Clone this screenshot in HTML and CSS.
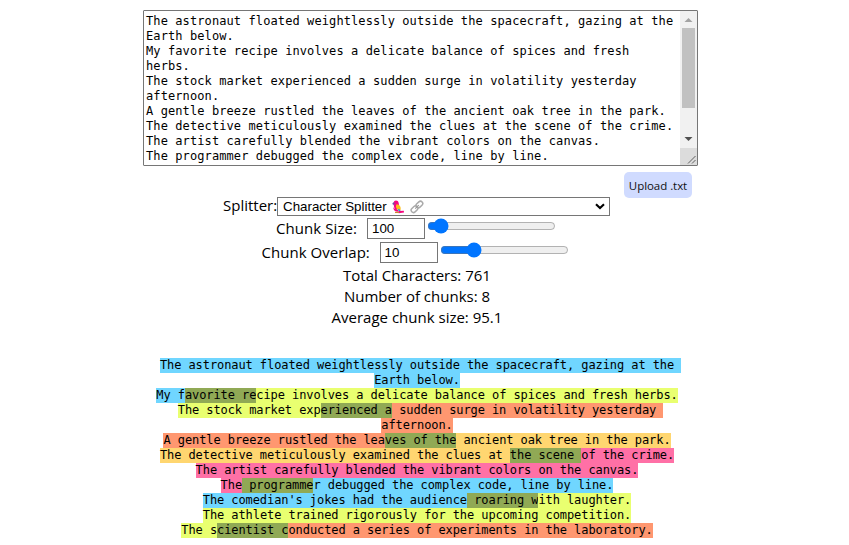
FILE: index.html
```
<!DOCTYPE html>
<html lang="en">
<head>
<meta charset="utf-8">
<title>Chunk Visualizer</title>
<link rel="stylesheet" href="styles.css">
</head>
<body>
<main class="app">
  <div class="editor">
    <div class="editor-text">The astronaut floated weightlessly outside the spacecraft, gazing at the
Earth below.
My favorite recipe involves a delicate balance of spices and fresh
herbs.
The stock market experienced a sudden surge in volatility yesterday
afternoon.
A gentle breeze rustled the leaves of the ancient oak tree in the park.
The detective meticulously examined the clues at the scene of the crime.
The artist carefully blended the vibrant colors on the canvas.
The programmer debugged the complex code, line by line.</div>
    <div class="scrollbar">
      <svg class="arrow" viewBox="0 0 17 17"><path d="M4.5 11 8.5 7 12.5 11Z" fill="#a3a3a3"/></svg>
      <div class="thumb"></div>
      <div class="track"></div>
      <svg class="arrow" viewBox="0 0 17 17"><path d="M4.5 6 8.5 10 12.5 6Z" fill="#505050"/></svg>
      <svg class="grip" viewBox="0 0 17 17"><path d="M8 15.5 15.5 8M12 15.5 15.5 12" stroke="#606060" fill="none"/></svg>
    </div>
  </div>
  <div class="upload-row"><button class="upload" type="button">Upload .txt</button></div>
  <div class="row splitter">
    <span class="label label-splitter">Splitter:</span>
    <div class="select" role="combobox">
      <span class="select-text">Character Splitter</span>
      <svg class="parrot" viewBox="0 0 14 14">
        <path d="M3 1.5C4-.2 7.4.1 7.7 3L8.5 8 5 10C2.6 8 2.5 5 3 1.5Z" fill="#f5087f"/>
        <path d="M3 2 1.4 3.2 2 5 3.8 4Z" fill="#704c9e"/>
        <path d="M2.2 7.2C2.4 10.5 4.5 12 8 11.7L7 9.8 4 9Z" fill="#f5087f"/>
        <path d="M5.6 4.3C8.9 4.6 10.2 7 9.4 10.5L6.5 9.6C4.6 8 4.6 6 5.6 4.3Z" fill="#ffbd16"/>
        <path d="M8 8.8 9.6 10.8 8.4 11.5 6.8 9.8Z" fill="#16a9df"/>
        <path d="M8 11 12.8 10.8 13 12.5 7.7 13.2Z" fill="#f5087f"/>
        <path d="M4 12.4H8" stroke="#c98a33" stroke-width="1.3"/>
      </svg>
      <svg class="link" viewBox="0 0 14 14">
        <g fill="none" stroke="#aaa" stroke-width="1.5"><rect x="-3.7" y="-2.3" width="7.4" height="4.6" rx="2.3" transform="translate(4.5 9.2) rotate(-43)"/><rect x="-3.7" y="-2.3" width="7.4" height="4.6" rx="2.3" transform="translate(9.4 4.5) rotate(-43)"/></g>
        <path d="M5.2 8.7 8.8 5.1" stroke="#999" stroke-width="1.1"/>
      </svg>
      <svg class="caret" viewBox="0 0 10 7"><path d="M1 1.2 5 5 9 1.2" fill="none" stroke="#000" stroke-width="2.1"/></svg>
    </div>
  </div>
  <div class="row field">
    <span class="label label-size">Chunk Size:</span>
    <input class="number" type="text" value="100">
    <input class="range" type="range" min="0" max="1000" value="50">
  </div>
  <div class="row field">
    <span class="label label-overlap">Chunk Overlap:</span>
    <input class="number" type="text" value="10">
    <input class="range" type="range" min="0" max="1000" value="232">
  </div>
  <div class="stats">
    <div class="total">Total Characters: 761</div>
    <div class="count">Number of chunks: 8</div>
    <div class="average">Average chunk size: 95.1</div>
  </div>
  <div class="chunks">
    <div class="line trailing"><span class="blue">The astronaut floated weightlessly outside the spacecraft, gazing at the </span></div>
    <div class="line"><span class="blue">Earth below.</span></div>
    <div class="line"><span class="blue">My f</span><span class="overlap">avorite re</span><span class="lime">cipe involves a delicate balance of spices and fresh herbs.</span></div>
    <div class="line trailing"><span class="lime">The stock market exp</span><span class="overlap">erienced a</span><span class="orange"> sudden surge in volatility yesterday </span></div>
    <div class="line"><span class="orange">afternoon.</span></div>
    <div class="line"><span class="orange">A gentle breeze rustled the lea</span><span class="overlap">ves of the</span><span class="yellow"> ancient oak tree in the park.</span></div>
    <div class="line"><span class="yellow">The detective meticulously examined the clues at </span><span class="overlap">the scene </span><span class="pink">of the crime.</span></div>
    <div class="line"><span class="pink">The artist carefully blended the vibrant colors on the canvas.</span></div>
    <div class="line"><span class="pink">The</span><span class="overlap"> programme</span><span class="blue">r debugged the complex code, line by line.</span></div>
    <div class="line"><span class="blue">The comedian's jokes had the audience</span><span class="overlap"> roaring w</span><span class="lime">ith laughter.</span></div>
    <div class="line"><span class="lime">The athlete trained rigorously for the upcoming competition.</span></div>
    <div class="line"><span class="lime">The s</span><span class="overlap">cientist c</span><span class="orange">onducted a series of experiments in the laboratory.</span></div>
  </div>
</main>
</body>
</html>
```
FILE: styles.css
```
* { box-sizing: border-box; }
body { margin: 0; background: #fff; color: #000; font: 15px/21px "Open Sans", sans-serif; overflow: hidden; }
.app { width: 834px; height: 545px; padding-top: 10px; display: flex; flex-direction: column; align-items: center; }
.editor { width: 555px; height: 156px; flex: none; margin-left: 7px; display: flex; border: 1px solid #767676; border-radius: 1px; overflow: hidden; }
.editor-text { flex: 1; padding: 3px 2px 0; white-space: pre; font: 12px/15px "DejaVu Sans Mono", monospace; letter-spacing: 0.098px; }
.scrollbar { width: 17px; display: flex; flex-direction: column; background: #f1f1f1; }
.arrow, .grip { width: 17px; height: 17px; display: block; flex: none; }
.thumb { width: 13px; height: 80px; margin-left: 2px; background: #c1c1c1; }
.track { flex: 1; }
.grip { background: #dcdcdc; }
.upload-row { width: 555px; margin-left: 7px; padding: 6px 6px 0 0; display: flex; justify-content: flex-end; }
.upload { width: 68px; height: 26px; padding: 1px 0 0; border: 0; border-radius: 5px; background: #d0dbff; color: #111; font: 11.5px/25px "Open Sans", sans-serif; letter-spacing: -0.05px; white-space: nowrap; }
.row { display: flex; flex: none; }
.splitter { height: 20px; margin-top: -1px; margin-right: 1px; }
.label { white-space: pre; line-height: 20px; }
.label-splitter { width: 54px; margin-top: -2px; }
.label-size { width: 91px; letter-spacing: 0.08px; }
.label-overlap { width: 118px; letter-spacing: 0.04px; }
.select { width: 333px; height: 19px; display: flex; align-items: center; padding: 0 2px 0 5px; border: 1px solid #767676; font: 13.333px/17px "Liberation Sans", sans-serif; }
.select-text { width: 108px; white-space: nowrap; }
.parrot { width: 14px; height: 14px; }
.link { width: 14px; height: 14px; margin-left: 5px; }
.caret { width: 10px; height: 7px; margin-left: auto; margin-right: 2px; }
.field { height: 24px; padding-top: 1px; }
.field + .field { margin-right: 2px; }
.number { width: 58px; height: 21px; padding: 1px 4px; border: 1px solid #767676; font: 13.333px "Liberation Sans", sans-serif; }
.range { width: 129px; height: 16px; margin: 0 2px; }
.stats { text-align: center; }
.stats > div { height: 21px; white-space: pre; }
.chunks { width: 100%; margin-top: 30px; font: 12px/15px "DejaVu Sans Mono", monospace; letter-spacing: -0.083px; }
.line { height: 15px; display: flex; justify-content: center; white-space: pre; }
.line > span { height: 15px; }
.trailing { padding-left: 7.15px; }
.blue { background: #70d6ff; }
.lime { background: #e9ff70; }
.orange { background: #ff9770; }
.yellow { background: #ffd670; }
.pink { background: #ff70a6; }
.overlap { background: #90a955; }
```
